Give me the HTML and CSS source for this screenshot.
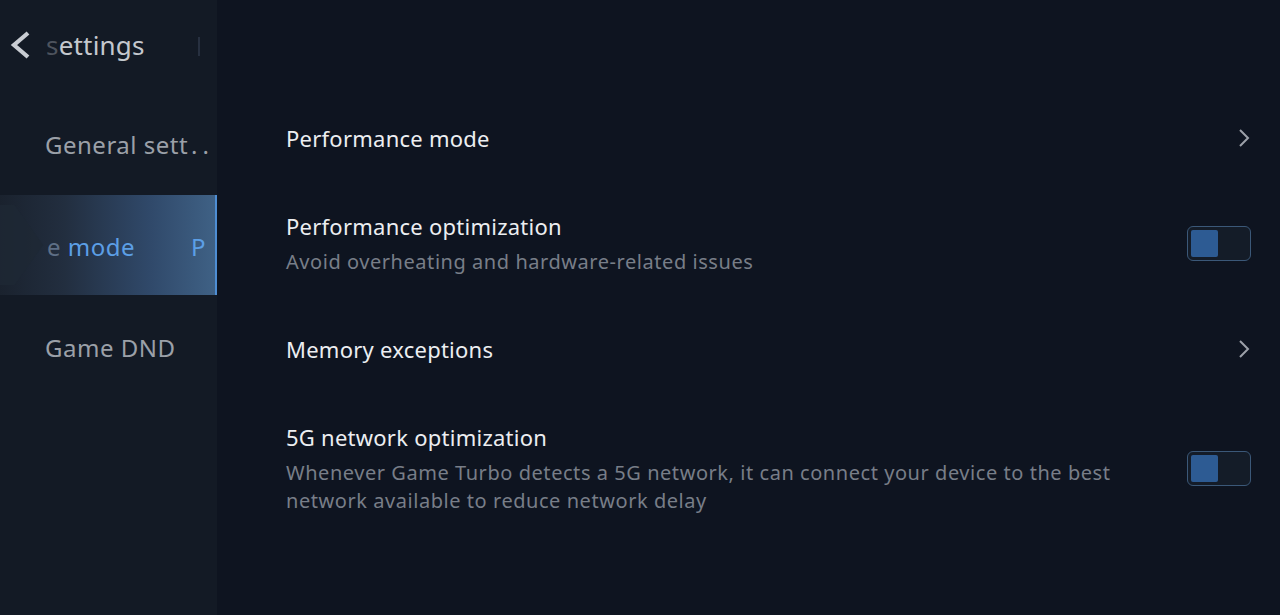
FILE: index.html
```html
<!DOCTYPE html>
<html lang="en">
<head>
<meta charset="utf-8">
<title>Settings</title>
<link rel="stylesheet" href="styles.css">
</head>
<body>
<div class="app">
  <aside class="sidebar">
    <header class="header">
      <svg class="back" width="24" height="30" viewBox="0 0 24 30"><path d="M20 3 L6 15 L20 27" fill="none" stroke="#c9cdd3" stroke-width="4.2" stroke-linejoin="miter"/></svg>
      <span class="title"><span class="fade">s</span>ettings</span>
      <span class="divider"></span>
    </header>
    <nav class="nav">
      <div class="nav-item">General sett<span class="dots">..</span></div>
      <div class="nav-item active">
        <span class="shape"></span>
        <span class="label"><span class="fade-blue">e</span> mode</span>
        <span class="next">P</span>
      </div>
      <div class="nav-item">Game DND</div>
    </nav>
  </aside>
  <main class="content">
    <div class="row">
      <div class="text"><div class="name">Performance mode</div></div>
      <svg class="chev" width="12" height="20" viewBox="0 0 12 20"><path d="M2 2 L10 10 L2 18" fill="none" stroke="#9ca1a9" stroke-width="2"/></svg>
    </div>
    <div class="row">
      <div class="text">
        <div class="name">Performance optimization</div>
        <div class="desc">Avoid overheating and hardware-related issues</div>
      </div>
      <div class="toggle"><span class="knob"></span></div>
    </div>
    <div class="row">
      <div class="text"><div class="name">Memory exceptions</div></div>
      <svg class="chev" width="12" height="20" viewBox="0 0 12 20"><path d="M2 2 L10 10 L2 18" fill="none" stroke="#9ca1a9" stroke-width="2"/></svg>
    </div>
    <div class="row">
      <div class="text">
        <div class="name">5G network optimization</div>
        <div class="desc">Whenever Game Turbo detects a 5G network, it can connect your device to the best network available to reduce network delay</div>
      </div>
      <div class="toggle"><span class="knob"></span></div>
    </div>
  </main>
</div>
</body>
</html>
```

FILE: styles.css
```css
* { box-sizing: border-box; }
html, body {
  margin: 0;
  padding: 0;
  width: 1280px;
  height: 615px;
  overflow: hidden;
  background: #0e1420;
  font-family: "Noto Sans", "Roboto", sans-serif;
}
.app {
  display: flex;
  height: 615px;
}
.sidebar {
  width: 217px;
  flex: none;
  background: #131a25;
  display: flex;
  flex-direction: column;
}
.header {
  height: 92px;
  display: flex;
  align-items: center;
  padding-left: 8px;
  padding-bottom: 2px;
  position: relative;
}
.back { flex: none; }
.title {
  margin-left: 14px;
  font-size: 26px;
  color: #c4c8ce;
  letter-spacing: 0.2px;
}
.title .fade { color: #4d535d; }
.divider {
  position: absolute;
  left: 198px;
  top: 37px;
  width: 2px;
  height: 19px;
  background: #273040;
}
.nav {
  display: flex;
  flex-direction: column;
}
.nav-item {
  height: 103px;
  display: flex;
  align-items: center;
  padding-left: 45px;
  padding-top: 2px;
  font-size: 24px;
  letter-spacing: 0.5px;
  color: #9ba0a8;
  white-space: nowrap;
  position: relative;
  overflow: hidden;
}
.dots { letter-spacing: 5px; margin-left: 3px; }
.nav-item.active {
  height: 100px;
  padding-left: 47px;
  color: #5c9fe6;
  background: linear-gradient(90deg, #1a222e 0%, #222e3f 30%, #30496a 70%, #3f6185 100%);
  border-right: 2px solid #4e8ed4;
}
.shape {
  position: absolute;
  left: 0;
  top: 0;
  width: 48px;
  height: 100px;
  background: #1e2835;
  clip-path: polygon(0 10%, 30% 10%, 90% 50%, 30% 90%, 0 90%);
  opacity: 0.8;
}
.label { position: relative; }
.fade-blue { color: #5e6f86; }
.next {
  position: absolute;
  left: 191px;
  color: #5c9fe6;
}
.content {
  flex: 1;
  padding: 94px 29px 0 69px;
  display: flex;
  flex-direction: column;
}
.row {
  display: flex;
  align-items: center;
  justify-content: space-between;
  padding: 29px 0;
}
.text { max-width: 870px; }
.name {
  font-size: 22px;
  line-height: 30px;
  letter-spacing: 0.25px;
  color: #eceef1;
}
.desc {
  margin-top: 7px;
  font-size: 20px;
  line-height: 28px;
  letter-spacing: 0.55px;
  color: #787e88;
}
.chev { flex: none; margin-right: 1px; }
.toggle {
  width: 64px;
  height: 35px;
  flex: none;
  border: 1.5px solid #3b5878;
  border-radius: 6px;
  background: #141c28;
  padding: 2.5px;
  display: flex;
}
.knob {
  width: 27px;
  height: 27px;
  border-radius: 2px;
  background: #2d5b93;
}
```
